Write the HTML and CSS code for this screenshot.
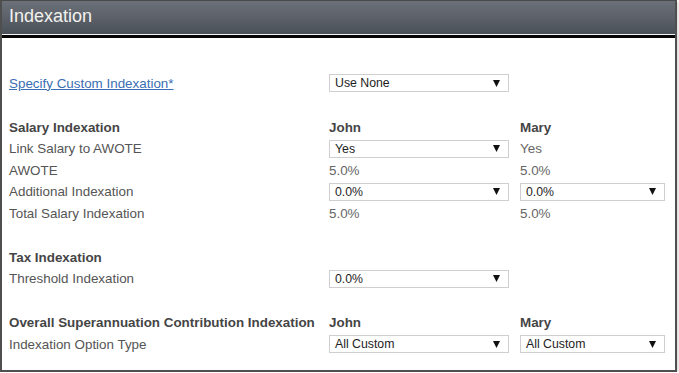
FILE: index.html
```html
<!DOCTYPE html>
<html>
<head>
<meta charset="utf-8">
<link rel="stylesheet" href="styles.css">
</head>
<body>
<div class="panel">
  <div class="header"><span class="title">Indexation</span></div>
  <div class="rule"></div>
  <div class="content">
    <div class="section first">
      <div class="cell"><a class="link" href="#">Specify Custom Indexation*</a></div>
      <div class="cell"><div class="select w-john"><span>Use None</span><svg class="arrow" viewBox="0 0 8 8"><path d="M0 0H8L4 8Z"/></svg></div></div>
      <div class="cell"></div>
    </div>
    <div class="section">
      <div class="cell bold">Salary Indexation</div>
      <div class="cell bold">John</div>
      <div class="cell bold">Mary</div>

      <div class="cell">Link Salary to AWOTE</div>
      <div class="cell"><div class="select w-john"><span>Yes</span><svg class="arrow" viewBox="0 0 8 8"><path d="M0 0H8L4 8Z"/></svg></div></div>
      <div class="cell val">Yes</div>

      <div class="cell">AWOTE</div>
      <div class="cell val">5.0%</div>
      <div class="cell val">5.0%</div>

      <div class="cell">Additional Indexation</div>
      <div class="cell"><div class="select w-john"><span>0.0%</span><svg class="arrow" viewBox="0 0 8 8"><path d="M0 0H8L4 8Z"/></svg></div></div>
      <div class="cell"><div class="select w-mary"><span>0.0%</span><svg class="arrow" viewBox="0 0 8 8"><path d="M0 0H8L4 8Z"/></svg></div></div>

      <div class="cell">Total Salary Indexation</div>
      <div class="cell val">5.0%</div>
      <div class="cell val">5.0%</div>
    </div>
    <div class="section">
      <div class="cell bold">Tax Indexation</div>
      <div class="cell"></div>
      <div class="cell"></div>

      <div class="cell">Threshold Indexation</div>
      <div class="cell"><div class="select w-john"><span>0.0%</span><svg class="arrow" viewBox="0 0 8 8"><path d="M0 0H8L4 8Z"/></svg></div></div>
      <div class="cell"></div>
    </div>
    <div class="section">
      <div class="cell bold">Overall Superannuation Contribution Indexation</div>
      <div class="cell bold">John</div>
      <div class="cell bold">Mary</div>

      <div class="cell">Indexation Option Type</div>
      <div class="cell"><div class="select w-john"><span>All Custom</span><svg class="arrow" viewBox="0 0 8 8"><path d="M0 0H8L4 8Z"/></svg></div></div>
      <div class="cell"><div class="select w-mary"><span>All Custom</span><svg class="arrow" viewBox="0 0 8 8"><path d="M0 0H8L4 8Z"/></svg></div></div>
    </div>
  </div>
</div>
</body>
</html>
```
FILE: styles.css
```css
html, body {
  margin: 0;
  padding: 0;
  background: #ffffff;
}
body {
  font-family: "Liberation Sans", Arial, sans-serif;
}
.panel {
  width: 673px;
  height: 369px;
  border: 2px solid #4f4f4f;
  border-top: 1px solid #4a4a4a;
  box-shadow: 2px 2px 2px rgba(0, 0, 0, 0.12);
  background: #fff;
  overflow: hidden;
}
.header {
  height: 32px;
  background: linear-gradient(to bottom, #6c7078 0%, #5d626a 50%, #4b5159 100%);
  display: flex;
  align-items: center;
  padding-left: 7px;
}
.title {
  color: #f2f2ee;
  font-size: 18px;
  line-height: 1;
  margin-top: -2px;
}
.rule {
  height: 1px;
  background: #f4f4f4;
  border-bottom: 3px solid #050505;
  border-top: 1px solid #4b5159;
}
.content {
  padding: 34.5px 0 0 7px;
}
.section {
  display: grid;
  grid-template-columns: 320px 191px 1fr;
  grid-auto-rows: 21.5px;
  font-size: 13.4px;
  color: #555;
}
.section + .section {
  margin-top: 22.5px;
}
.section.first {
  margin-bottom: 1px;
}
.cell {
  display: flex;
  align-items: center;
  white-space: nowrap;
}
.bold {
  font-weight: bold;
  color: #454545;
}
.val {
  color: #666;
}
.link {
  color: #3a6eb4;
  text-decoration: underline;
}
.select {
  box-sizing: border-box;
  height: 18px;
  border: 1px solid #cfcfcf;
  background: #fff;
  display: flex;
  align-items: center;
  justify-content: space-between;
  padding: 0 8px 0 5px;
  font-size: 12.3px;
  color: #1e1e1e;
}
.w-john {
  width: 180px;
}
.w-mary {
  width: 145px;
}
.arrow {
  width: 7px;
  height: 7px;
  fill: #111;
}
```
